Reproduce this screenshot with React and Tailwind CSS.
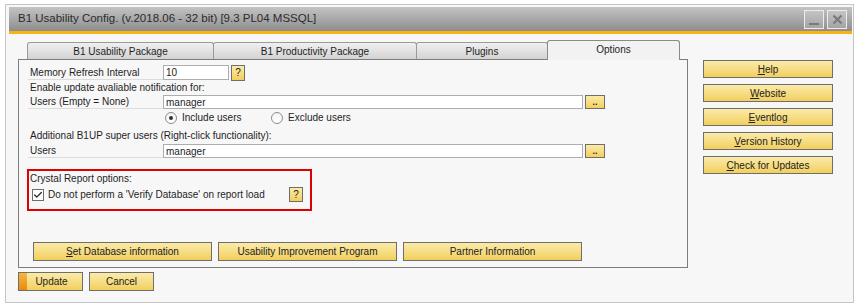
import { Check } from "lucide-react";

function YBtn({ children, className = "" }) {
  return (
    <div
      className={
        "flex items-center justify-center border border-[#6e6e6e] bg-gradient-to-b from-[#fbeba8] to-[#f2cf5c] text-[#222] " +
        className
      }
    >
      {children}
    </div>
  );
}

function Label({ children }) {
  return (
    <div className="ml-[9px] flex h-full w-[135px] items-center border-b border-[#dcdcdc] pl-[2px]">
      {children}
    </div>
  );
}

function Input({ value, className = "" }) {
  return (
    <div
      className={
        "flex h-[14px] items-center border border-[#adadad] bg-white pl-[2px] " + className
      }
    >
      {value}
    </div>
  );
}

function Dots() {
  return (
    <YBtn className="ml-[2px] h-[14px] w-[20px] text-[9px] font-bold leading-none text-[#8a5a10]">
      ..
    </YBtn>
  );
}

function Radio({ checked }) {
  return (
    <div className="flex h-[12px] w-[12px] items-center justify-center rounded-full border border-[#8c8c8c] bg-gradient-to-b from-[#f4f4f4] to-white">
      {checked && <div className="h-[4px] w-[4px] rounded-full bg-[#333]" />}
    </div>
  );
}

const tabs = [
  { label: "B1 Usability Package", w: "w-[187px]" },
  { label: "B1 Productivity Package", w: "w-[204px]" },
  { label: "Plugins", w: "w-[132px]" },
];

export default function App() {
  return (
    <div className="h-[307px] w-[861px] overflow-hidden bg-white pl-[5px] pt-[4px] font-['Liberation_Sans',Arial,sans-serif] text-[10px] text-[#1e1e1e]">
      <div className="flex h-[299px] w-[849px] flex-col border border-[#c4c4c4] bg-[#f7f7f7] pl-[3px] pr-[1px] pt-[2px]">
        {/* title bar */}
        <div className="flex h-[24px] items-center justify-between bg-gradient-to-b from-[#c3c3c3] to-[#8e8e8e] pl-[9px] pr-[5px]">
          <div className="text-[11.5px] text-[#2b2b2b]">
            B1 Usability Config. (v.2018.06 - 32 bit) [9.3 PL04 MSSQL]
          </div>
          <div className="flex gap-[3px]">
            <div className="flex h-[19px] w-[20px] items-end justify-center border border-[#ececec] bg-white/15 pb-[3px]">
              <div className="h-[2px] w-[10px] bg-[#7a7a7a]" />
            </div>
            <div className="flex h-[19px] w-[20px] items-center justify-center border border-[#ececec] bg-white/15">
              <svg width="11" height="11" viewBox="0 0 11 11">
                <path d="M1.5 1.5 L9.5 9.5 M9.5 1.5 L1.5 9.5" stroke="#7a7a7a" strokeWidth="2.2" />
              </svg>
            </div>
          </div>
        </div>
        <div className="h-[3px] bg-[#f7b40e]" />

        {/* body */}
        <div className="flex flex-1 pl-[9px]">
          <div className="flex flex-col">
            {/* tabs */}
            <div className="mt-[6px] flex h-[19px] items-end pl-[9px]">
              {tabs.map((t) => (
                <div
                  key={t.label}
                  className={
                    "-ml-px flex h-[17px] items-center justify-center rounded-t-[3px] border border-b-0 border-[#9a9a9a] bg-gradient-to-b from-[#f0f0f0] to-[#d3d3d3] text-[10px] first:ml-0 " +
                    t.w
                  }
                >
                  {t.label}
                </div>
              ))}
              <div className="relative z-10 -mb-px -ml-px flex h-[20px] w-[133px] items-center justify-center rounded-t-[3px] border border-b-0 border-[#8a8a8a] bg-[#f2f2f2] pb-[2px]">
                Options
              </div>
            </div>

            {/* panel */}
            <div className="flex h-[209px] w-[670px] flex-col border border-[#7d7d7d]">
              <div className="mt-[5px] flex h-[15px] items-center">
                <Label>Memory Refresh Interval</Label>
                <Input value="10" className="h-[15px] w-[66px]" />
                <YBtn className="ml-[2px] h-[16px] w-[14px] text-[10px]">?</YBtn>
              </div>
              <div className="flex h-[15px] items-center pl-[11px]">
                Enable update avaliable notification for:
              </div>
              <div className="flex h-[14px] items-center">
                <Label>Users (Empty = None)</Label>
                <Input value="manager" className="w-[420px]" />
                <Dots />
              </div>
              <div className="flex h-[17px] items-center pl-[146px]">
                <div className="flex w-[106px] items-center gap-[5px]">
                  <Radio checked />
                  <span>Include users</span>
                </div>
                <div className="flex items-center gap-[5px]">
                  <Radio />
                  <span>Exclude users</span>
                </div>
              </div>
              <div className="flex h-[18px] items-end pb-[1px] pl-[11px]">
                Additional B1UP super users (Right-click functionality):
              </div>
              <div className="flex h-[14px] items-center">
                <Label>Users</Label>
                <Input value="manager" className="w-[420px]" />
                <Dots />
              </div>

              {/* crystal report box */}
              <div className="ml-[8px] mt-[11px] flex h-[42px] w-[285px] flex-col border-2 border-[#e10000] pl-[1px]">
                <div className="flex h-[15px] items-center">Crystal Report options:</div>
                <div className="flex h-[17px] items-center">
                  <div className="ml-[2px] flex h-[12px] w-[12px] items-center justify-center border border-[#6e6e6e] bg-white">
                    <Check size={10} strokeWidth={3} color="#222" />
                  </div>
                  <span className="ml-[4px] w-[241px]">
                    Do not perform a 'Verify Database' on report load
                  </span>
                  <YBtn className="h-[15px] w-[14px] text-[10px]">?</YBtn>
                </div>
              </div>

              <div className="mb-[6px] mt-auto flex gap-[6px] pl-[14px]">
                <YBtn className="h-[19px] w-[179px]">
                  <span>
                    <u>S</u>et Database information
                  </span>
                </YBtn>
                <YBtn className="h-[19px] w-[179px]">Usability Improvement Program</YBtn>
                <YBtn className="h-[19px] w-[179px]">Partner Information</YBtn>
              </div>
            </div>

            {/* update / cancel */}
            <div className="mt-[4px] flex gap-[6px]">
              <div className="flex h-[19px] w-[65px] border border-[#6e6e6e]">
                <div className="w-[8px] bg-gradient-to-b from-[#f7b63c] to-[#e98a0c]" />
                <div className="flex flex-1 items-center justify-center bg-gradient-to-b from-[#fbeba8] to-[#f2cf5c] pr-[6px]">
                  Update
                </div>
              </div>
              <YBtn className="h-[19px] w-[65px]">Cancel</YBtn>
            </div>
          </div>

          {/* right buttons */}
          <div className="ml-[15px] mt-[26px] flex flex-col gap-[6px]">
            <YBtn className="h-[18px] w-[130px]">
              <span>
                <u>H</u>elp
              </span>
            </YBtn>
            <YBtn className="h-[18px] w-[130px]">
              <span>
                <u>W</u>ebsite
              </span>
            </YBtn>
            <YBtn className="h-[18px] w-[130px]">
              <span>
                <u>E</u>ventlog
              </span>
            </YBtn>
            <YBtn className="h-[18px] w-[130px]">
              <span>
                <u>V</u>ersion History
              </span>
            </YBtn>
            <YBtn className="h-[18px] w-[130px]">
              <span>
                <u>C</u>heck for Updates
              </span>
            </YBtn>
          </div>
        </div>
      </div>
    </div>
  );
}
